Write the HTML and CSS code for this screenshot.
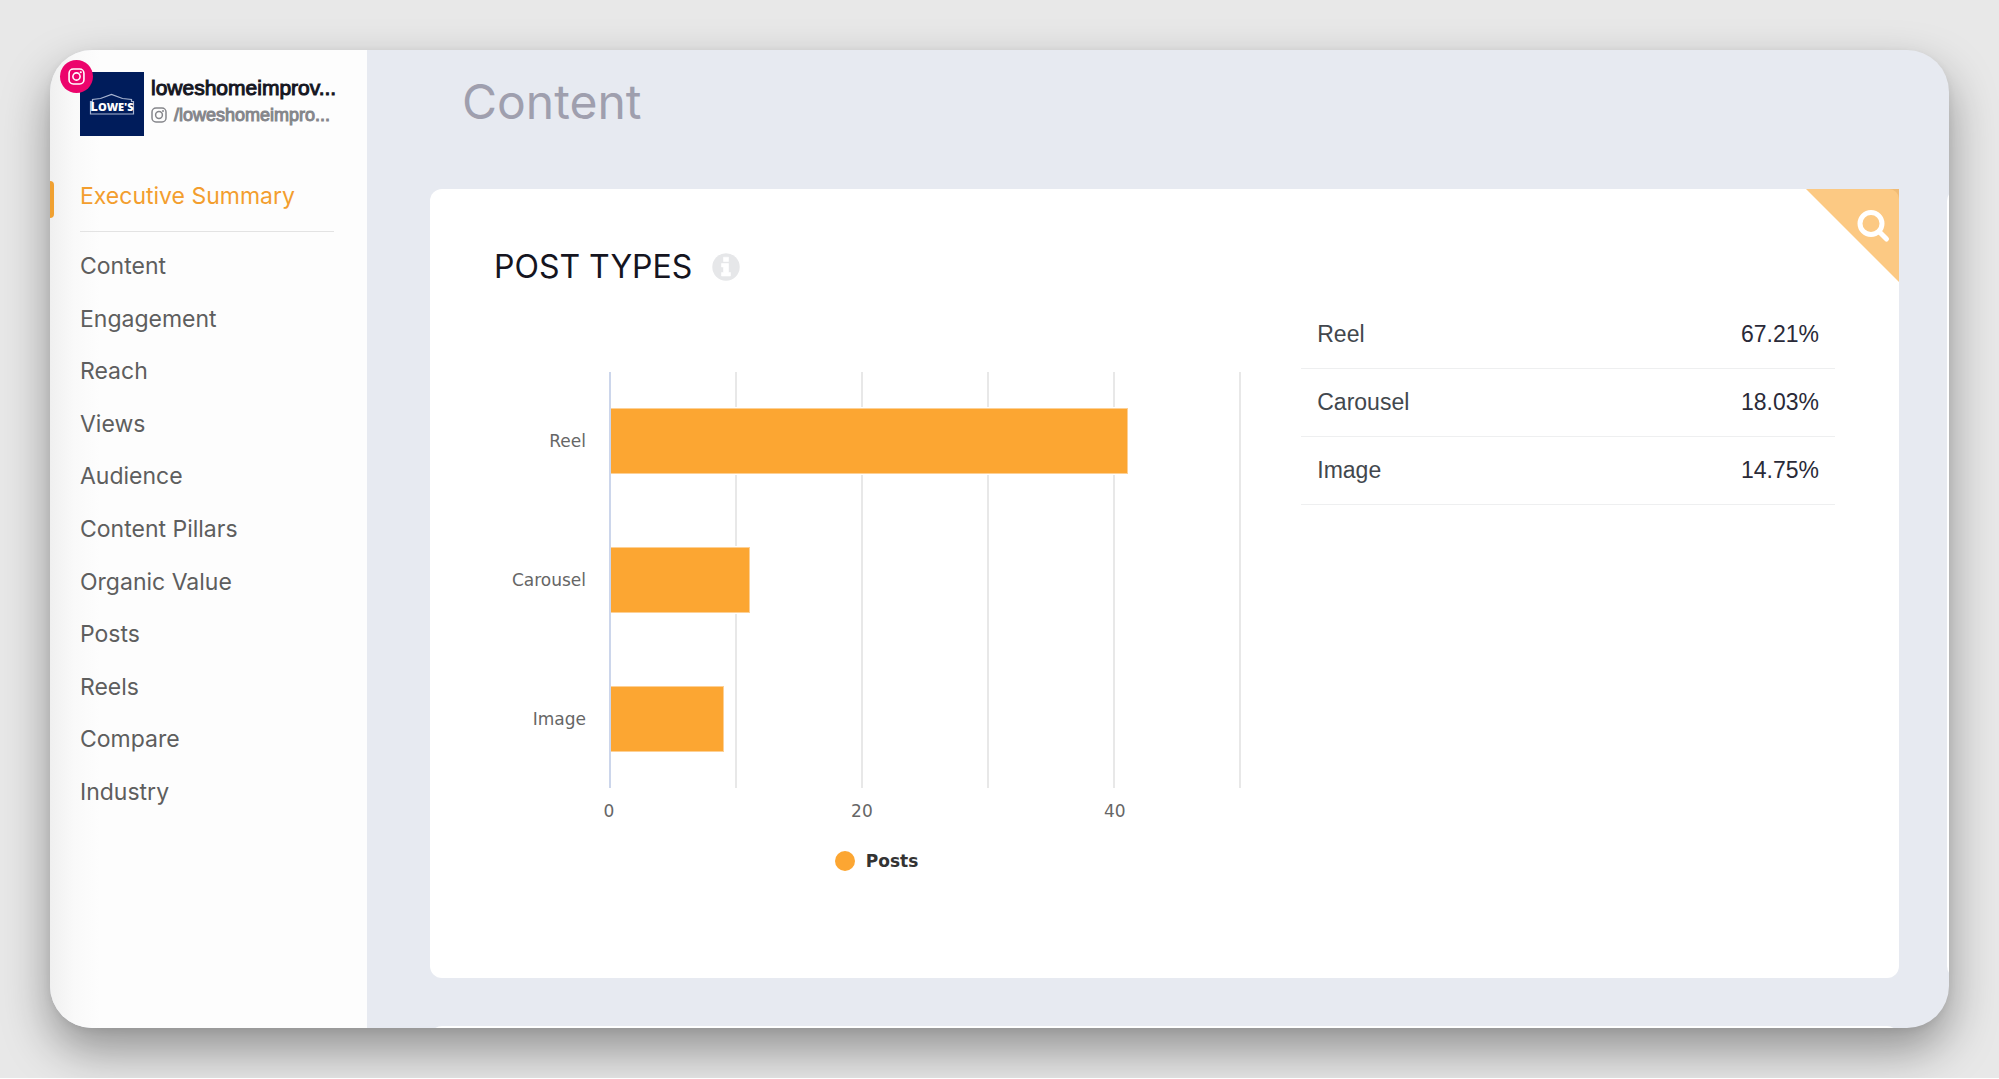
FILE: index.html
```html
<!DOCTYPE html>
<html lang="en">
<head>
<meta charset="utf-8">
<meta name="viewport" content="width=device-width, initial-scale=1">
<title>Content</title>
<link rel="stylesheet" href="styles.css">
</head>
<body>
<svg class="defs" width="0" height="0" aria-hidden="true">
  <symbol id="instagram" viewBox="0 0 16 16">
    <rect x="1" y="1" width="14" height="14" rx="4" fill="none" stroke="currentColor" stroke-width="1.5"/>
    <circle cx="8" cy="8" r="3.4" fill="none" stroke="currentColor" stroke-width="1.5"/>
    <circle cx="12" cy="4" r="1" fill="currentColor"/>
  </symbol>
</svg>
<div class="page">
  <div class="window">
    <aside class="sidebar">
      <header class="profile">
        <div class="avatar">
          <svg viewBox="0 0 64 64" role="img" aria-label="Lowe's">
            <path d="M10.500 42V29.500H12.500V27.500L20.500 26.500L31.500 22.500L42.500 26.500L51.500 27.500V29.500H53.500V42Z" fill="none" stroke="#a9b6d2" stroke-width="1.200"/>
            <text x="32" y="39" text-anchor="middle" class="avatar-text">L<tspan class="avatar-small">OWE'S</tspan></text>
          </svg>
          <span class="badge"><svg><use href="#instagram"/></svg></span>
        </div>
        <div class="identity">
          <p class="name">loweshomeimprov...</p>
          <p class="handle"><svg><use href="#instagram"/></svg>/loweshomeimpro...</p>
        </div>
      </header>
      <nav>
        <a class="active" href="#summary">Executive Summary</a>
        <ul class="links">
          <li><a href="#content">Content</a></li>
          <li><a href="#engagement">Engagement</a></li>
          <li><a href="#reach">Reach</a></li>
          <li><a href="#views">Views</a></li>
          <li><a href="#audience">Audience</a></li>
          <li><a href="#pillars">Content Pillars</a></li>
          <li><a href="#value">Organic Value</a></li>
          <li><a href="#posts">Posts</a></li>
          <li><a href="#reels">Reels</a></li>
          <li><a href="#compare">Compare</a></li>
          <li><a href="#industry">Industry</a></li>
        </ul>
      </nav>
    </aside>
    <main class="main">
      <h1>Content</h1>
      <section class="card post-types">
        <button class="corner" type="button" aria-label="Zoom in">
          <svg viewBox="0 0 93 93">
            <path d="M0 0H93V93Z" fill="#fcc983"/>
            <path d="M83 0H93V10A10 10 0 0 0 83 0Z" fill="#f0bb75"/>
            <circle cx="65" cy="34.500" r="11" fill="none" stroke="#fff" stroke-width="5"/>
            <path d="M73 42.500L80.500 50" stroke="#fff" stroke-width="5" stroke-linecap="round"/>
          </svg>
        </button>
        <h2>POST TYPES
          <svg class="info" viewBox="0 0 28 28" aria-hidden="true">
            <circle cx="14" cy="14" r="13.700" fill="#e6e7e9"/>
            <path d="M11.500 4.200h5v4.300h-5zM9.500 10.500h7v9h2v3.500h-9v-3.500h2v-5.500h-2z" fill="#fff" stroke="#fff" stroke-width=".6" stroke-linejoin="round"/>
          </svg>
        </h2>
        <div class="columns">
          <figure class="chart">
            <div class="categories"><span>Reel</span><span>Carousel</span><span>Image</span></div>
            <div class="plot">
              <div class="gridlines"><i></i><i></i><i></i><i></i><i></i></div>
              <div class="bars">
                <div class="bar" style="width: 82%"></div>
                <div class="bar" style="width: 22%"></div>
                <div class="bar" style="width: 18%"></div>
              </div>
            </div>
            <div class="scale"><div class="ticks"><span>0</span><span></span><span>20</span><span></span><span>40</span><span></span></div></div>
            <figcaption class="legend">Posts</figcaption>
          </figure>
          <table class="shares">
            <tbody>
              <tr><th scope="row">Reel</th><td>67.21%</td></tr>
              <tr><th scope="row">Carousel</th><td>18.03%</td></tr>
              <tr><th scope="row">Image</th><td>14.75%</td></tr>
            </tbody>
          </table>
        </div>
      </section>
      <section class="card"></section>
      <section class="card next"></section>
    </main>
  </div>
</div>
</body>
</html>
```
FILE: styles.css
```css
* {
  box-sizing: border-box;
}

body,
h1,
h2,
p,
ul,
figure {
  margin: 0;
  padding: 0;
}

body {
  background: #fff;
  font-family: Inter, "Open Sans", sans-serif;
}

.defs {
  position: absolute;
}

.page {
  display: flex;
  min-height: calc(100vh - 1px);
  padding: 50px;
  background: #e8e8e8;
  overflow: hidden;
}

.window {
  display: flex;
  flex: 1;
  min-width: 0;
  border-radius: 42px;
  background: #e7eaf1;
  box-shadow: 0 22px 48px rgba(0, 0, 0, 0.38), 0 2px 8px rgba(0, 0, 0, 0.06);
  overflow: hidden;
}

/* Sidebar */

.sidebar {
  flex: none;
  width: 317px;
  padding: 22px 0 48px;
  background: linear-gradient(to right, #f0f0f0, #f9f9f9 24px, #fdfdfd 50px);
}

.profile {
  display: flex;
  gap: 7px;
  padding-left: 30px;
}

.avatar {
  position: relative;
  width: 64px;
  height: 64px;
  background: #001c5b;
}

.avatar > svg {
  display: block;
}

.avatar-text {
  fill: #fff;
  font: 800 13px "Open Sans", sans-serif;
}

.avatar-small {
  font-size: 11px;
}

.badge {
  position: absolute;
  top: -12px;
  left: -20px;
  display: grid;
  place-items: center;
  width: 33px;
  height: 33px;
  border-radius: 50%;
  background: #ec046c;
  color: #fff;
}

.badge svg {
  width: 17px;
  height: 17px;
}

.identity {
  font-family: "Liberation Sans", Arial, sans-serif;
  white-space: nowrap;
}

.name {
  padding-top: 3px;
  color: #15161f;
  font-size: 21px;
  line-height: 26px;
  -webkit-text-stroke: 1px;
}

.handle {
  display: flex;
  align-items: center;
  gap: 7px;
  color: #85868b;
  font-size: 18px;
  line-height: 28px;
  -webkit-text-stroke: 1px;
}

.handle svg {
  width: 16px;
  height: 16px;
}

nav {
  margin-top: 40px;
  font-size: 23px;
  font-weight: 400;
  line-height: 28px;
}

nav a {
  color: #5e5e5e;
  text-decoration: none;
}

nav .active {
  position: relative;
  display: block;
  margin: 0 33px 0 30px;
  padding: 6px 0 21px;
  border-bottom: 1px solid #e3e3e3;
  color: #f39e2e;
}

nav .active::before {
  content: "";
  position: absolute;
  top: 5px;
  left: -30px;
  width: 4px;
  height: 37px;
  border-radius: 0 5px 5px 0;
  background: #f0a132;
}

.links {
  display: grid;
  grid-auto-rows: 1fr;
  align-items: center;
  height: 578px;
  margin-top: 8px;
  padding-left: 30px;
  list-style: none;
}

/* Main area */

.main {
  display: grid;
  flex: 1;
  grid-template-columns: minmax(0, 1fr) 2px;
  grid-template-rows: 91px 1fr 2px;
  gap: 48px;
  min-width: 0;
  padding-left: 63px;
  overflow: hidden;
}

h1 {
  grid-column: 1 / -1;
  padding: 24px 0 0 32px;
  color: #9f9fae;
  font-size: 48px;
  font-weight: 400;
  line-height: 56px;
}

.card {
  position: relative;
  min-width: 24px;
  border-radius: 12px;
  background: #fff;
}

.next {
  height: 48px;
}

.post-types {
  padding: 54px 64px 64px;
}

.corner {
  position: absolute;
  top: 0;
  right: 0;
  width: 93px;
  height: 93px;
  padding: 0;
  border: 0;
  background: none;
}

.corner svg {
  display: block;
}

h2 {
  display: flex;
  align-items: center;
  gap: 20px;
  color: #15151f;
  font-size: 32px;
  font-weight: 400;
  line-height: 48px;
}

.info {
  width: 28px;
  height: 28px;
}

.columns {
  display: grid;
  grid-template-columns: 7fr 5fr;
  gap: 60px;
  align-items: start;
  margin-top: 9px;
}

/* Bar chart */

.chart {
  display: grid;
  grid-template-columns: 115px minmax(0, 1fr);
  grid-template-rows: 416px 48px 40px;
  padding-top: 72px;
  color: #666;
  font-family: "DejaVu Sans", sans-serif;
  font-size: 17px;
}

.categories {
  display: grid;
  grid-template-rows: repeat(3, 1fr);
  align-items: center;
  padding-right: 23px;
  text-align: right;
}

.plot {
  display: grid;
  border-left: 2px solid #ccd6eb;
}

.gridlines,
.bars {
  display: grid;
  grid-area: 1 / 1;
}

.gridlines {
  grid-template-columns: repeat(5, 1fr);
}

.gridlines i {
  border-right: 2px solid #e8e8e8;
}

.bars {
  grid-template-rows: repeat(3, 1fr);
  align-items: center;
}

.bar {
  height: 66px;
  border: 1px solid #fdd095;
  border-left: 0;
  background: #fca632;
  box-shadow: 1px 0 0 1px #fff;
}

.scale {
  grid-column: 2;
}

.ticks {
  display: grid;
  grid-template-columns: repeat(6, 1fr);
  margin: 0 -10%;
  line-height: 46px;
  text-align: center;
}

.legend {
  display: flex;
  grid-column: 1 / -1;
  gap: 11px;
  align-items: center;
  justify-content: center;
  padding-left: 18px;
  padding-top: 10px;
  color: #333;
  font-weight: 700;
}

.legend::before {
  content: "";
  width: 20px;
  height: 20px;
  border-radius: 50%;
  background: #fca632;
}

/* Share of each post type */

.shares {
  width: 100%;
  border-collapse: collapse;
  font-family: "Liberation Sans", Arial, sans-serif;
  font-size: 23px;
  line-height: 28px;
}

.shares th,
.shares td {
  height: 68px;
  padding: 0 16px;
  border-bottom: 1px solid #eeeff0;
}

.shares th {
  color: #42474d;
  font-weight: 400;
  text-align: left;
}

.shares td {
  color: #2a2a38;
  text-align: right;
}
```
